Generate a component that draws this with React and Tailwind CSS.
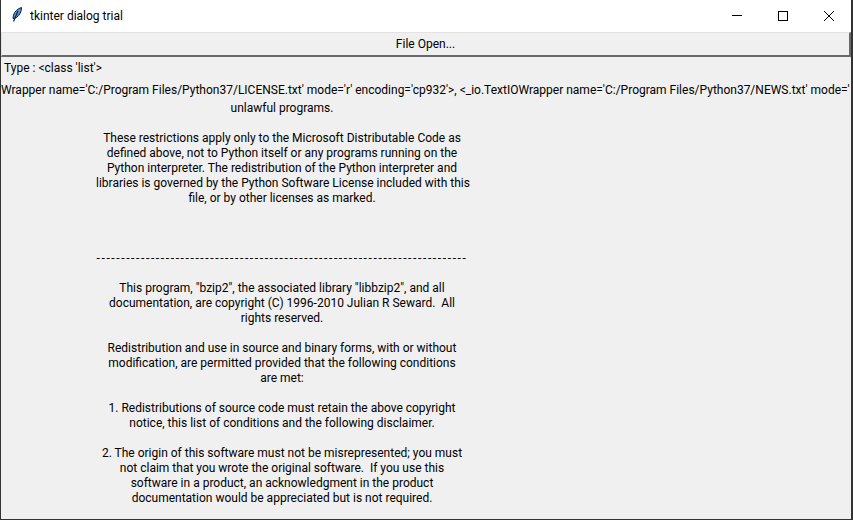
const bodyLines = [
  'unlawful programs.',
  '',
  'These restrictions apply only to the Microsoft Distributable Code as',
  'defined above, not to Python itself or any programs running on the',
  'Python interpreter. The redistribution of the Python interpreter and',
  'libraries is governed by the Python Software License included with this',
  'file, or by other licenses as marked.',
  '',
  '',
  '',
  '---------------------------------------------------------------------------',
  '',
  'This program, "bzip2", the associated library "libbzip2", and all',
  'documentation, are copyright (C) 1996-2010 Julian R Seward.  All',
  'rights reserved.',
  '',
  'Redistribution and use in source and binary forms, with or without',
  'modification, are permitted provided that the following conditions',
  'are met:',
  '',
  '1. Redistributions of source code must retain the above copyright',
  'notice, this list of conditions and the following disclaimer.',
  '',
  '2. The origin of this software must not be misrepresented; you must',
  'not claim that you wrote the original software.  If you use this',
  'software in a product, an acknowledgment in the product',
  'documentation would be appreciated but is not required.',
]

function Feather() {
  return (
    <svg width="16" height="16" viewBox="0 0 16 16">
      <path d="M12.5 0.5 C9 1.5 5.5 4.5 4.5 8 L4 11.5 L7.5 10.5 C10.5 8.5 12.5 5 12.5 0.5 Z" fill="#5d94e0" stroke="#10203a" strokeWidth="1" />
      <path d="M9 4 L4.5 14.5" stroke="#10203a" strokeWidth="1.2" fill="none" />
    </svg>
  )
}

function App() {
  return (
    <div className="w-[853px] h-[520px] flex flex-col overflow-hidden bg-[#f0f0f0] border-l border-b border-r-2 border-[#333333] text-[#000] text-[12px] leading-[15px] font-['Roboto','Noto_Sans',sans-serif]">

      <div className="h-[32px] bg-white flex items-center shrink-0">
        <div className="ml-[8px] mr-[5px] mb-[2px] flex"><Feather /></div>
        <span className="text-[12px]">tkinter dialog trial</span>
        <div className="ml-auto flex h-[31px] self-start">
          <div className="w-[46px] flex items-center justify-center">
            <div className="w-[10px] h-px bg-black" />
          </div>
          <div className="w-[46px] flex items-center justify-center">
            <div className="w-[10px] h-[10px] border border-black" />
          </div>
          <div className="w-[45px] flex items-center justify-center">
            <svg width="10" height="10" viewBox="0 0 10 10">
              <path d="M0 0 L10 10 M10 0 L0 10" stroke="#000" strokeWidth="1" />
            </svg>
          </div>
        </div>
      </div>

      <div className="h-[25px] shrink-0 flex items-center justify-center border border-[#e3e3e3] border-r-2 border-b-2 border-r-[#696969] border-b-[#696969] bg-[#f0f0f0]">
        File Open...
      </div>

      <div className="mt-[4px] pl-[3px] h-[15px]">Type : &lt;class 'list'&gt;</div>

      <div className="mt-[7px] h-[15px] whitespace-nowrap overflow-hidden">
        Wrapper name='C:/Program Files/Python37/LICENSE.txt' mode='r' encoding='cp932'&gt;, &lt;_io.TextIOWrapper name='C:/Program Files/Python37/NEWS.txt' mode='
      </div>

      <div className="mt-[3px] w-[372px] ml-[95px] text-center whitespace-pre">
        {bodyLines.map(function(line, i) {
          if (line.startsWith('---')) {
            return <div key={i} className="h-[15px] tracking-[1.63px]">{line}</div>
          }
          return <div key={i} className="h-[15px]">{line}</div>
        })}
      </div>
    </div>
  )
}

export default App
